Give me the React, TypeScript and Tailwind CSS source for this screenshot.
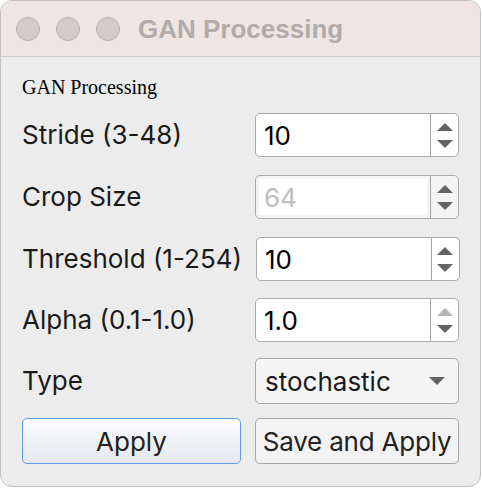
import React from "react";

const sans = "font-['Inter','Liberation_Sans',sans-serif]";

function Arrow({ up, light }: { up?: boolean; light?: boolean }) {
  return (
    <svg width="16" height="8" viewBox="0 0 16 8" className="block">
      <polygon
        points={up ? "8,0 16,8 0,8" : "0,0 16,0 8,8"}
        fill={light ? "#b4b4b4" : "#646464"}
      />
    </svg>
  );
}

function SpinBox({
  value,
  disabled,
  upDisabled,
}: {
  value: string;
  disabled?: boolean;
  upDisabled?: boolean;
}) {
  return (
    <div
      className={`flex h-[44px] w-[204px] rounded-[5px] border border-[#a9a9a9] ${
        disabled ? "bg-[#f4f4f4]" : "bg-white"
      }`}
    >
      <div className={`flex flex-1 items-center ${disabled ? "p-[3px]" : ""}`}>
        <div
          className={`flex h-full w-full items-center ${
            disabled ? "bg-white pl-[5px] text-[#bdbdbd]" : "pl-[8px] text-black"
          } text-[26px]`}
        >
          {value}
        </div>
      </div>
      <div className="flex w-[28px] flex-col items-center justify-center gap-[9px] border-l border-[#a3a3a3]">
        <Arrow up light={upDisabled} />
        <Arrow />
      </div>
    </div>
  );
}

function Label({ children }: { children: React.ReactNode }) {
  return (
    <div className="whitespace-nowrap text-[26px] leading-none text-[#1a1a1a]">{children}</div>
  );
}

export default function App() {
  return (
    <div className={`h-[488px] w-[482px] bg-white ${sans}`}>
      <div className="flex h-[487px] w-[481px] flex-col overflow-hidden rounded-[12px] border border-[#c6c1c1] bg-[#ececec]">
        {/* Title bar */}
        <div className="flex h-[56px] shrink-0 items-center border-b border-[#cdc7c7] bg-[#efe5e5] pl-[15px]">
          <div className="flex gap-[16px]">
            <span className="h-[24px] w-[24px] rounded-full border border-[#bab0b1] bg-[#d6cccd]" />
            <span className="h-[24px] w-[24px] rounded-full border border-[#bab0b1] bg-[#d6cccd]" />
            <span className="h-[24px] w-[24px] rounded-full border border-[#bab0b1] bg-[#d6cccd]" />
          </div>
          <div className="ml-[18px] font-['Liberation_Sans',sans-serif] text-[26px] font-bold leading-none text-[#b3aaaa]">
            GAN Processing
          </div>
        </div>

        {/* Body */}
        <div className="flex flex-col px-[21px]">
          <div className="mt-[18px] h-[24px] font-['Liberation_Serif','Times_New_Roman',serif] text-[20px] leading-[24px] text-black">
            GAN Processing
          </div>

          <div className="mt-[14px] grid grid-cols-[1fr_204px] items-center gap-x-[14px]">
            <Label>Stride (3-48)</Label>
            <SpinBox value="10" />
          </div>

          <div className="mt-[18px] grid grid-cols-[1fr_204px] items-center gap-x-[14px]">
            <Label>Crop Size</Label>
            <SpinBox value="64" disabled />
          </div>

          <div className="mt-[18px] grid grid-cols-[1fr_204px] items-center gap-x-[14px]">
            <Label>Threshold (1-254)</Label>
            <SpinBox value="10" />
          </div>

          <div className="mt-[17px] grid grid-cols-[1fr_204px] items-center gap-x-[14px]">
            <Label>Alpha (0.1-1.0)</Label>
            <SpinBox value="1.0" upDisabled />
          </div>

          <div className="mt-[16px] grid grid-cols-[1fr_204px] items-center gap-x-[14px]">
            <Label>Type</Label>
            <div className="flex h-[46px] items-center justify-between rounded-[5px] border border-[#a9a9a9] bg-[#f5f5f5] pl-[9px] pr-[13px] text-[26px] text-[#1a1a1a]">
              <span>stochastic</span>
              <Arrow />
            </div>
          </div>

          <div className="mt-[14px] grid grid-cols-[1fr_204px] gap-x-[14px]">
            <button
              type="button"
              className="flex h-[46px] items-center justify-center rounded-[5px] border-[1.5px] border-[#5c9de6] bg-gradient-to-b from-[#fcfcfe] to-[#e4e7ec] text-[26px] text-[#222]"
            >
              Apply
            </button>
            <button
              type="button"
              className="flex h-[46px] items-center justify-center whitespace-nowrap rounded-[5px] border-[1.5px] border-[#a6a6a6] bg-[#f3f3f3] text-[26px] tracking-[-0.2px] text-[#222]"
            >
              Save and Apply
            </button>
          </div>
        </div>
      </div>
    </div>
  );
}
